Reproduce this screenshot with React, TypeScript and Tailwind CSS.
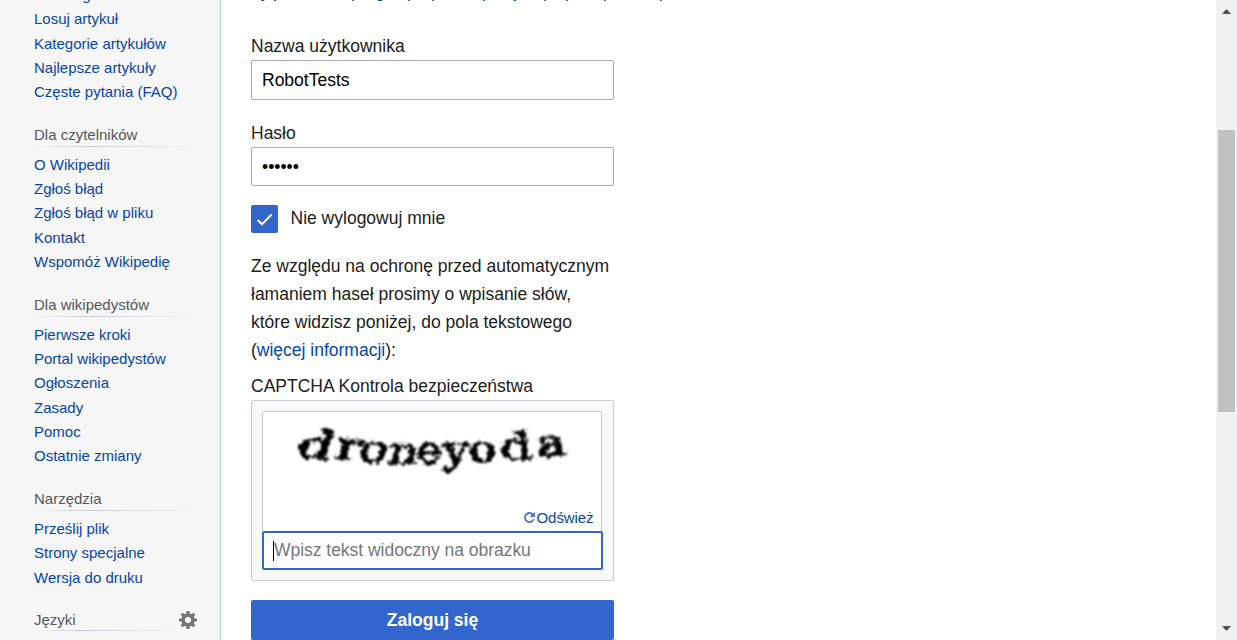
import React from "react";

const sections: { title: string; links: string[] }[] = [
  { title: "Dla czytelników", links: ["O Wikipedii", "Zgłoś błąd", "Zgłoś błąd w pliku", "Kontakt", "Wspomóż Wikipedię"] },
  { title: "Dla wikipedystów", links: ["Pierwsze kroki", "Portal wikipedystów", "Ogłoszenia", "Zasady", "Pomoc", "Ostatnie zmiany"] },
  { title: "Narzędzia", links: ["Prześlij plik", "Strony specjalne", "Wersja do druku"] },
];

const topLinks = ["Strona główna", "Losuj artykuł", "Kategorie artykułów", "Najlepsze artykuły", "Częste pytania (FAQ)"];

// position, slant, horizontal stretch and rotation of each captcha letter
const letters = [
  { c: "d", x: 293, y: 457, r: 5, k: -16, w: 1.5 },
  { c: "r", x: 332, y: 459, r: 4, k: -12, w: 1.5 },
  { c: "o", x: 357, y: 463, r: 0, k: -10, w: 1.3 },
  { c: "n", x: 386, y: 465, r: 0, k: -12, w: 1.3 },
  { c: "e", x: 417, y: 464, r: -2, k: 0, w: 1.15 },
  { c: "y", x: 443, y: 464, r: -3, k: -4, w: 1.3 },
  { c: "o", x: 470, y: 463, r: -4, k: 0, w: 1.25 },
  { c: "d", x: 502, y: 461, r: -3, k: 4, w: 1.42 },
  { c: "a", x: 539, y: 458, r: -6, k: 0, w: 1.38 },
];

function Heading({ children }: { children: React.ReactNode }) {
  return (
    <div className="relative h-6">
      <h3 className="h-6 leading-6 text-[#54595d]">{children}</h3>
      <div className="absolute bottom-0 left-0 h-px w-full bg-linear-to-r from-[#c8ccd1]/0 via-[#c8ccd1] via-33% to-[#c8ccd1]/0" />
    </div>
  );
}

function Links({ items }: { items: string[] }) {
  return (
    <ul>
      {items.map((t) => (
        <li key={t} className="h-[24.25px] leading-[24px] whitespace-nowrap">
          <a className="text-[#0645ad]">{t}</a>
        </li>
      ))}
    </ul>
  );
}

export default function App() {
  return (
    <div className="flex h-[640px] w-[1237px] overflow-hidden bg-white font-['Liberation_Sans',Arial,sans-serif]">
      <nav className="h-full w-[221px] shrink-0 overflow-hidden border-r border-[#a7d7f9] bg-[#f6f6f6] pl-[34px] text-[15px]">
        <div className="-mt-[17px] mb-[-0.25px]">
          <Links items={topLinks} />
        </div>
        {sections.map((s) => (
          <section key={s.title} className="mt-[19px] w-[163px]">
            <Heading>{s.title}</Heading>
            <div className="pt-[5.75px]">
              <Links items={s.links} />
            </div>
          </section>
        ))}
        <div className="mt-[17.25px] flex items-start">
          <div className="w-[145px]">
            <Heading>
              <span className="block pt-px">Języki</span>
            </Heading>
          </div>
          <svg className="mt-[4px] h-[18px] w-[18px]" viewBox="0 0 20 20" fill="#72777d">
            <g transform="translate(10 10)">
              <path id="cog" d="M1.5-10h-3l-1 6.5h5m0 7h-5l1 6.5h3" />
              <use href="#cog" transform="rotate(45)" />
              <use href="#cog" transform="rotate(90)" />
              <use href="#cog" transform="rotate(135)" />
            </g>
            <path d="M10 2.5a7.5 7.5 0 0 0 0 15 7.5 7.5 0 0 0 0-15v4a3.5 3.5 0 0 1 0 7 3.5 3.5 0 0 1 0-7" />
          </svg>
        </div>
      </nav>

      <main className="h-full w-[995px] shrink-0 overflow-hidden pl-[30px] text-[17.5px] leading-7 text-[#202122]">
        <div className="-mt-[23px] flex h-7 whitespace-nowrap">
          <span className="w-[22px]">Ty</span>
          <span className="w-[78px]">possesz</span>
          <span className="flex text-[#0645ad]">
            <span className="w-[24px]">po</span>
            <span className="w-[32px]">gan</span>
            <span className="w-[24px]">po</span>
            <span className="w-[51px]">pomoc</span>
            <span className="w-[32px]">pod</span>
            <span className="w-[29px]">ja</span>
            <span className="w-[22px]">po</span>
            <span className="w-[38px]">pasa</span>
            <span className="w-[56px]">pasan</span>
            <span>po</span>
          </span>
        </div>
        <form className="w-[363px]">
          <label className="mt-[27px] block h-7">Nazwa użytkownika</label>
          <div className="flex h-10 items-center rounded-[2px] border border-[#a2a9b1] px-[10px] text-black">RobotTests</div>
          <label className="mt-[19px] block h-7">Hasło</label>
          <div className="flex h-[39px] items-center rounded-[2px] border border-[#a2a9b1] px-[10px] text-black">••••••</div>
          <div className="mt-[19px] flex h-7">
            <div className="flex h-7 w-[27px] items-center justify-center rounded-[2px] bg-[#3366cc]">
              <svg className="h-[17px] w-[17px]" viewBox="0 0 20 20" fill="#fff" stroke="#fff" strokeWidth="0.5">
                <path d="M7 14.17 2.83 10l-1.41 1.41L7 17 19 5l-1.41-1.42z" />
              </svg>
            </div>
            <span className="-mt-px ml-[12.5px]">Nie wylogowuj mnie</span>
          </div>
          <p className="mt-[19px] whitespace-nowrap">
            Ze względu na ochronę przed automatycznym<br />łamaniem haseł prosimy o wpisanie słów,<br />które widzisz poniżej, do pola tekstowego<br />(<a className="text-[#0645ad]">więcej informacji</a>):
          </p>
          <label className="mt-2 block h-7">CAPTCHA Kontrola bezpieczeństwa</label>
          <div className="h-[181px] rounded-[2px] border border-[#c8ccd1] bg-[#f8f9fa] p-[10px]">
            <div className="flex h-[120px] w-[340px] flex-col rounded-t-[2px] border border-b-0 border-[#c8ccd1] bg-white">
              <svg className="h-[92px] w-[338px]" viewBox="263 412 338 92">
                <defs>
                  <filter id="ragged" x="-5%" y="-20%" width="110%" height="140%">
                    <feTurbulence type="fractalNoise" baseFrequency="0.25" numOctaves="2" seed="4" result="n" />
                    <feDisplacementMap in="SourceGraphic" in2="n" scale="8" xChannelSelector="R" yChannelSelector="G" />
                    <feGaussianBlur stdDeviation="0.9" />
                  </filter>
                </defs>
                <g filter="url(#ragged)" fill="#000" stroke="#000" strokeWidth="1.6">
                  {letters.map((l, i) => (
                    <text key={i} fontSize={38} fontFamily="DejaVu Serif, serif" transform={`translate(${l.x} ${l.y}) rotate(${l.r}) skewX(${l.k}) scale(${l.w * 0.95} 1)`}>{l.c}</text>
                  ))}
                </g>
              </svg>
              <div className="flex h-7 items-center justify-end pt-px pr-[7.5px] text-[15px] text-[#0645ad]">
                <svg className="mr-px h-[13px] w-[13px]" viewBox="0 0 20 20" fill="#3366cc" stroke="#3366cc" strokeWidth="0.6">
                  <path d="M15.65 4.35A8 8 0 1 0 17.4 13h-2.22a6 6 0 1 1-1-7.22L11 9h7V2z" />
                </svg>
                <span className="tracking-[-0.08px]">Odśwież</span>
              </div>
            </div>
            <div className="flex h-[39px] w-[341px] items-center rounded-[2px] border-2 border-[#3366cc] bg-white pl-[9px] whitespace-nowrap text-[#72777d]">
              <span className="h-5 w-px bg-black" />
              <span className="-mt-px tracking-[-0.03px]">Wpisz tekst widoczny na obrazku</span>
            </div>
          </div>
          <div className="mt-[19px] flex h-10 items-center justify-center rounded-[2px] bg-[#3366cc] font-bold text-white">Zaloguj się</div>
        </form>
      </main>

      <div className="flex h-full w-[21px] shrink-0 flex-col items-center bg-[#f1f1f1]">
        <svg className="mt-[9px] h-[5px] w-[9px]" viewBox="0 0 9 5" fill="#505050"><path d="M4.5 0 9 5H0z" /></svg>
        <div className="mt-[116px] h-[282px] w-[17px] bg-[#c1c1c1]" />
        <svg className="mt-[214px] h-[5px] w-[9px]" viewBox="0 0 9 5" fill="#505050"><path d="M4.5 5 9 0H0z" /></svg>
      </div>
    </div>
  );
}
